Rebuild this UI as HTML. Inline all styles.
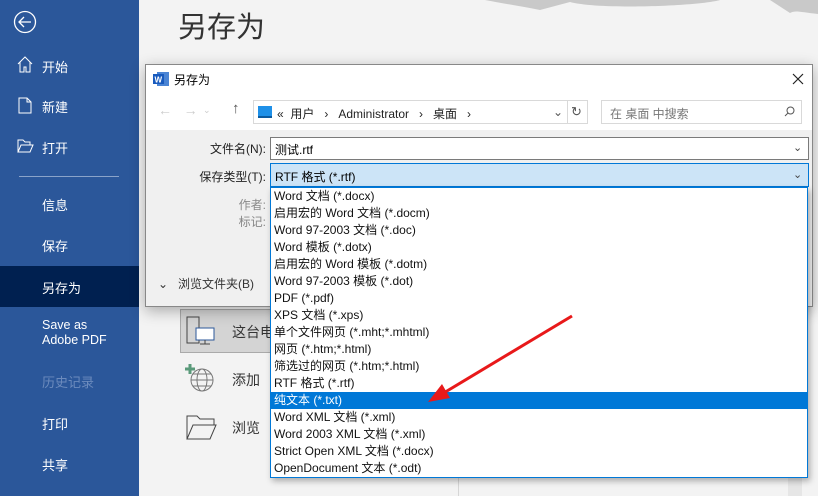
<!DOCTYPE html>
<html><head><meta charset="utf-8"><style>
*{margin:0;padding:0;box-sizing:border-box}
body{width:818px;height:496px;overflow:hidden;background:#f3f3f3;font-family:"Liberation Sans","Noto Sans CJK SC",sans-serif;position:relative}
.abs{position:absolute}
.side{left:0;top:0;width:139px;height:496px;background:#2b579a;color:#fff}
.side .it{position:absolute;left:42px;font-size:13px}
.dlg{left:145px;top:64px;width:668px;height:243px;background:#f0f0f0;border:1px solid #888;box-shadow:0 4px 14px rgba(0,0,0,.3)}
.lbl{font-size:12px;color:#222;text-align:right;position:absolute}
.list{left:270px;top:187px;width:538px;height:291px;background:#fff;border:1px solid #0078d7;box-shadow:2px 3px 6px rgba(0,0,0,.3)}
.list div{height:17px;line-height:17px;font-size:12px;padding-left:3px;color:#111;white-space:nowrap}
.list .sel{background:#0078d7;color:#fff}
</style></head><body>
<svg class="abs" style="left:300px;top:0" width="518" height="30"><path d="M0 0 L 518 0 L518 14 C500 12 495 10 490 13 L470 0 L420 0 C400 6 300 10 270 2 L240 10 C220 6 200 3 185 0 Z" fill="#c9c9c9"/></svg>
<div class="abs" style="left:178px;top:4px;font-size:29px;color:#333">另存为</div>
<div class="abs" style="left:458px;top:306px;width:1px;height:190px;background:#d6d6d6"></div>
<div class="abs" style="left:788px;top:306px;width:14px;height:190px;background:#e6e6e6"></div>
<div class="abs" style="left:180px;top:309px;width:100px;height:44px;background:#d4d4d4;border:1px solid #aaa"></div>
<svg class="abs" style="left:186px;top:316px" width="34" height="30" fill="none" stroke="#444"><rect x="1" y="1" width="12" height="26"/><rect x="10" y="12" width="18" height="12" fill="#fff" stroke="#2b579a"/><path d="M19 24v4M14 28h10"/></svg>
<div class="abs" style="left:232px;top:322px;font-size:14px;color:#333">这台电</div>
<svg class="abs" style="left:184px;top:362px" width="32" height="30" fill="none" stroke="#777"><circle cx="18" cy="18" r="11"/><ellipse cx="18" cy="18" rx="5" ry="11"/><path d="M7 18h22M9 12h18M9 24h18"/><path d="M6 2v10M1 7h10" stroke="#5a9a7a" stroke-width="3"/></svg>
<div class="abs" style="left:232px;top:370px;font-size:14px;color:#333">添加</div>
<svg class="abs" style="left:186px;top:414px" width="32" height="26" fill="none" stroke="#444"><path d="M1 25V2h10l3 3h14v6M1 25l6-14h23l-6 14z"/></svg>
<div class="abs" style="left:232px;top:418px;font-size:14px;color:#333">浏览</div>

<div class="abs side">
<svg class="abs" style="left:13px;top:10px" width="24" height="24" fill="none" stroke="#fff" stroke-width="1.3"><circle cx="12" cy="12" r="10.5"/><path d="M6 12h12M11 7l-5 5 5 5"/></svg>
<svg class="abs" style="left:17px;top:56px" width="16" height="17" fill="none" stroke="#fff"><path d="M1 8L8 1l7 7M3 6v10h4v-5h2v5h4V6"/></svg>
<div class="it" style="top:57px">开始</div>
<svg class="abs" style="left:18px;top:97px" width="14" height="17" fill="none" stroke="#fff"><path d="M1 1h8l4 4v11H1zM9 1v4h4"/></svg>
<div class="it" style="top:97px">新建</div>
<svg class="abs" style="left:17px;top:139px" width="17" height="14" fill="none" stroke="#fff"><path d="M1 13V1h5l2 2h5v3M1 13l3-7h12l-3 7z"/></svg>
<div class="it" style="top:138px">打开</div>
<div class="abs" style="left:19px;top:176px;width:100px;height:1px;background:#8aa3c9"></div>
<div class="it" style="top:195px">信息</div>
<div class="it" style="top:236px">保存</div>
<div class="abs" style="left:0;top:266px;width:139px;height:41px;background:#002050"></div>
<div class="it" style="top:278px">另存为</div>
<div class="it" style="top:318px;font-size:12.5px;line-height:15px">Save as<br>Adobe PDF</div>
<div class="it" style="top:372px;color:#6c8bbd">历史记录</div>
<div class="it" style="top:414px">打印</div>
<div class="it" style="top:455px">共享</div>
</div>

<div class="abs dlg">
<div class="abs" style="left:0;top:0;width:666px;height:65px;background:#fff"></div>
<svg class="abs" style="left:7px;top:6px" width="16" height="16"><rect x="4" y="1" width="12" height="14" fill="#4a84d4"/><rect x="0" y="3" width="11" height="10" fill="#185abd"/><text x="1.5" y="11.5" font-size="8" fill="#fff" font-family="Liberation Sans" font-weight="bold">W</text></svg>
<div class="abs" style="left:28px;top:6px;font-size:12px">另存为</div>
<svg class="abs" style="left:646px;top:8px" width="12" height="12" stroke="#222" stroke-width="1.2"><path d="M1 1L11 11M11 1L1 11"/></svg>
<div class="abs" style="left:12px;top:37px;font-size:14px;color:#ccc">←&nbsp;&nbsp;&nbsp;→</div>
<div class="abs" style="left:57px;top:40px;font-size:9px;color:#ccc">⌄</div>
<div class="abs" style="left:86px;top:35px;font-size:15px;color:#555">↑</div>
<div class="abs" style="left:107px;top:35px;width:335px;height:24px;border:1px solid #d9d9d9;background:#fff"></div>
<div class="abs" style="left:112px;top:41px;width:14px;height:12px;background:#1e90e8;border-bottom:2px solid #0a5aa0"></div>
<div class="abs" style="left:131px;top:40px;font-size:12px;color:#222;white-space:nowrap">«&nbsp;&nbsp;用户&nbsp;&nbsp;&nbsp;›&nbsp;&nbsp;&nbsp;Administrator&nbsp;&nbsp;&nbsp;›&nbsp;&nbsp;&nbsp;桌面&nbsp;&nbsp;&nbsp;›</div>
<div class="abs" style="left:407px;top:40px;font-size:12px;color:#555">⌄</div>
<div class="abs" style="left:421px;top:35px;width:1px;height:24px;background:#d9d9d9"></div>
<div class="abs" style="left:425px;top:39px;font-size:13px;color:#555">↻</div>
<div class="abs" style="left:455px;top:35px;width:201px;height:24px;border:1px solid #d9d9d9;background:#fff"></div>
<div class="abs" style="left:464px;top:40px;font-size:12px;color:#777">在 桌面 中搜索</div>
<svg class="abs" style="left:638px;top:41px" width="11" height="11" fill="none" stroke="#555"><circle cx="6.5" cy="4.5" r="3.5"/><path d="M4 7L1 10"/></svg>
<div class="lbl" style="left:40px;top:75px;width:80px">文件名(N):</div>
<div class="abs" style="left:124px;top:72px;width:539px;height:23px;border:1px solid #7a7a7a;background:#fff;font-size:12px;padding:3px 4px">测试.rtf</div>
<div class="abs" style="left:647px;top:76px;font-size:11px;color:#444">⌄</div>
<div class="lbl" style="left:40px;top:103px;width:80px">保存类型(T):</div>
<div class="abs" style="left:124px;top:98px;width:539px;height:24px;border:1px solid #0078d7;background:#cce4f7;font-size:12px;padding:4px 4px">RTF 格式 (*.rtf)</div>
<div class="abs" style="left:647px;top:103px;font-size:11px;color:#444">⌄</div>
<div class="lbl" style="left:60px;top:131px;width:60px;color:#888">作者:</div>
<div class="lbl" style="left:60px;top:148px;width:60px;color:#888">标记:</div>
<div class="abs" style="left:12px;top:210px;font-size:12px;color:#333">⌄&nbsp;&nbsp;&nbsp;浏览文件夹(B)</div>
</div>

<div class="abs list">
<div>Word 文档 (*.docx)</div>
<div>启用宏的 Word 文档 (*.docm)</div>
<div>Word 97-2003 文档 (*.doc)</div>
<div>Word 模板 (*.dotx)</div>
<div>启用宏的 Word 模板 (*.dotm)</div>
<div>Word 97-2003 模板 (*.dot)</div>
<div>PDF (*.pdf)</div>
<div>XPS 文档 (*.xps)</div>
<div>单个文件网页 (*.mht;*.mhtml)</div>
<div>网页 (*.htm;*.html)</div>
<div>筛选过的网页 (*.htm;*.html)</div>
<div>RTF 格式 (*.rtf)</div>
<div class="sel">纯文本 (*.txt)</div>
<div>Word XML 文档 (*.xml)</div>
<div>Word 2003 XML 文档 (*.xml)</div>
<div>Strict Open XML 文档 (*.docx)</div>
<div>OpenDocument 文本 (*.odt)</div>
</div>
<svg class="abs" style="left:420px;top:310px" width="160" height="100"><path d="M152 6 L22 84" stroke="#e8191a" stroke-width="3"/><path d="M8 92 L22 74 L30 88 Z" fill="#e8191a"/></svg>
</body></html>
